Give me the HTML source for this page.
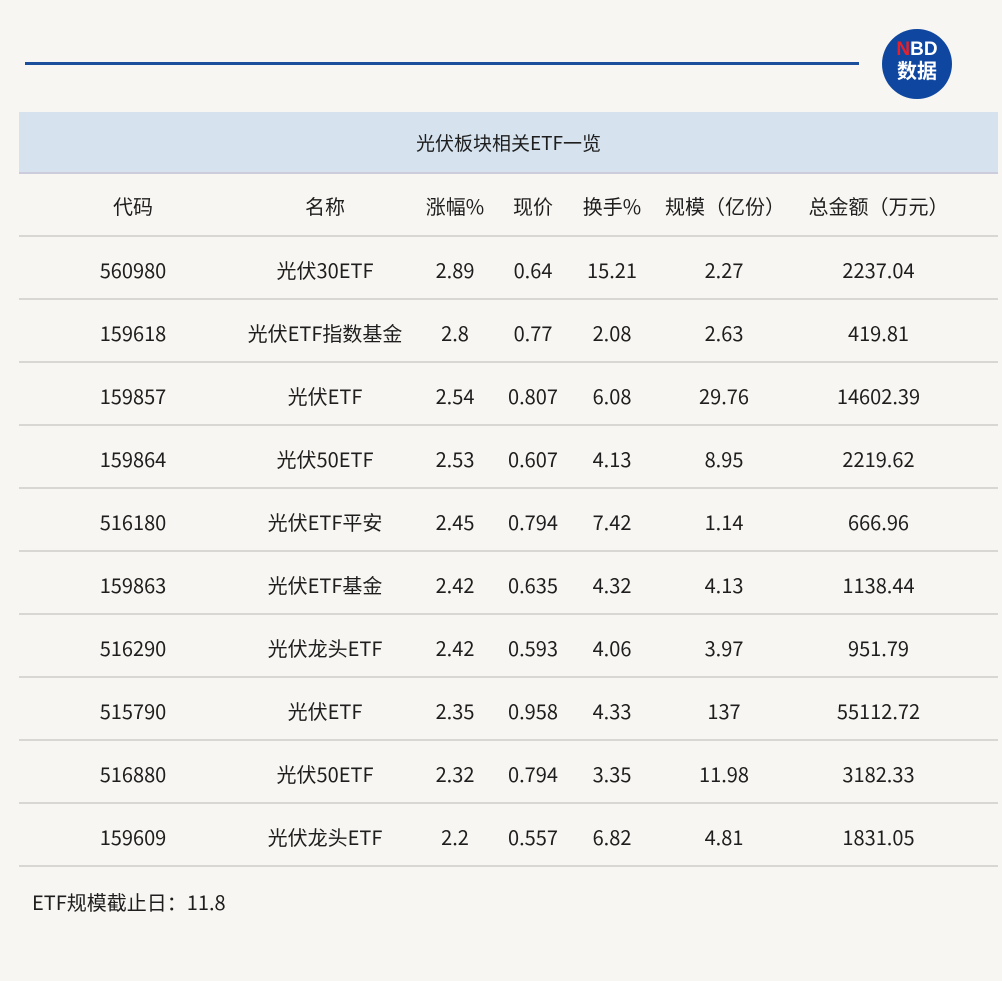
<!DOCTYPE html>
<html><head><meta charset="utf-8"><style>
body{margin:0;width:1002px;height:981px;background:#f8f6f2;font-family:"Noto Sans CJK SC","Liberation Sans",sans-serif;color:#1e1e1e;position:relative;overflow:hidden}
.line{position:absolute;left:25px;top:62px;width:834px;height:3px;background:#1b4f9c}
.logo{position:absolute;left:882px;top:29px;width:70px;height:70px;border-radius:50%;background:#0f47a0;color:#fff;text-align:center;font-weight:bold;font-family:"Liberation Sans","Noto Sans CJK SC",sans-serif}
.logo .a{position:absolute;top:11px;left:0;width:70px;font-size:19px;line-height:20px}
.logo .b{position:absolute;top:32px;left:0;width:70px;font-size:20px;line-height:22px}
.title{position:absolute;left:19px;top:112px;width:979px;height:60px;background:#d6e3ef;border-bottom:2px solid #ccd;text-align:center;line-height:62px;font-size:19px}
table{position:absolute;left:19px;top:173px;width:979px;border-collapse:collapse;font-size:20px;table-layout:fixed}
td{border-bottom:2px solid #d9d7d4;text-align:center;padding:0;line-height:20px;padding-top:4px;box-sizing:border-box;height:63px}
td:last-child{padding-right:24px}
.foot{position:absolute;left:32px;top:887px;font-size:20px}
</style></head><body>
<div class="line"></div>
<div class="logo"><div class="a"><span style="color:#e8202a">N</span>BD</div><div class="b">数据</div></div>
<div class="title">光伏板块相关ETF一览</div>
<table>
<colgroup><col style="width:228px"><col style="width:156px"><col style="width:104px"><col style="width:52px"><col style="width:106px"><col style="width:118px"><col style="width:215px"></colgroup>
<tr><td>代码</td><td>名称</td><td>涨幅%</td><td>现价</td><td>换手%</td><td>规模（亿份）</td><td>总金额（万元）</td></tr>
<tr><td>560980</td><td>光伏30ETF</td><td>2.89</td><td>0.64</td><td>15.21</td><td>2.27</td><td>2237.04</td></tr>
<tr><td>159618</td><td>光伏ETF指数基金</td><td>2.8</td><td>0.77</td><td>2.08</td><td>2.63</td><td>419.81</td></tr>
<tr><td>159857</td><td>光伏ETF</td><td>2.54</td><td>0.807</td><td>6.08</td><td>29.76</td><td>14602.39</td></tr>
<tr><td>159864</td><td>光伏50ETF</td><td>2.53</td><td>0.607</td><td>4.13</td><td>8.95</td><td>2219.62</td></tr>
<tr><td>516180</td><td>光伏ETF平安</td><td>2.45</td><td>0.794</td><td>7.42</td><td>1.14</td><td>666.96</td></tr>
<tr><td>159863</td><td>光伏ETF基金</td><td>2.42</td><td>0.635</td><td>4.32</td><td>4.13</td><td>1138.44</td></tr>
<tr><td>516290</td><td>光伏龙头ETF</td><td>2.42</td><td>0.593</td><td>4.06</td><td>3.97</td><td>951.79</td></tr>
<tr><td>515790</td><td>光伏ETF</td><td>2.35</td><td>0.958</td><td>4.33</td><td>137</td><td>55112.72</td></tr>
<tr><td>516880</td><td>光伏50ETF</td><td>2.32</td><td>0.794</td><td>3.35</td><td>11.98</td><td>3182.33</td></tr>
<tr><td>159609</td><td>光伏龙头ETF</td><td>2.2</td><td>0.557</td><td>6.82</td><td>4.81</td><td>1831.05</td></tr>
</table>
<div class="foot">ETF规模截止日：11.8</div>
</body></html>
